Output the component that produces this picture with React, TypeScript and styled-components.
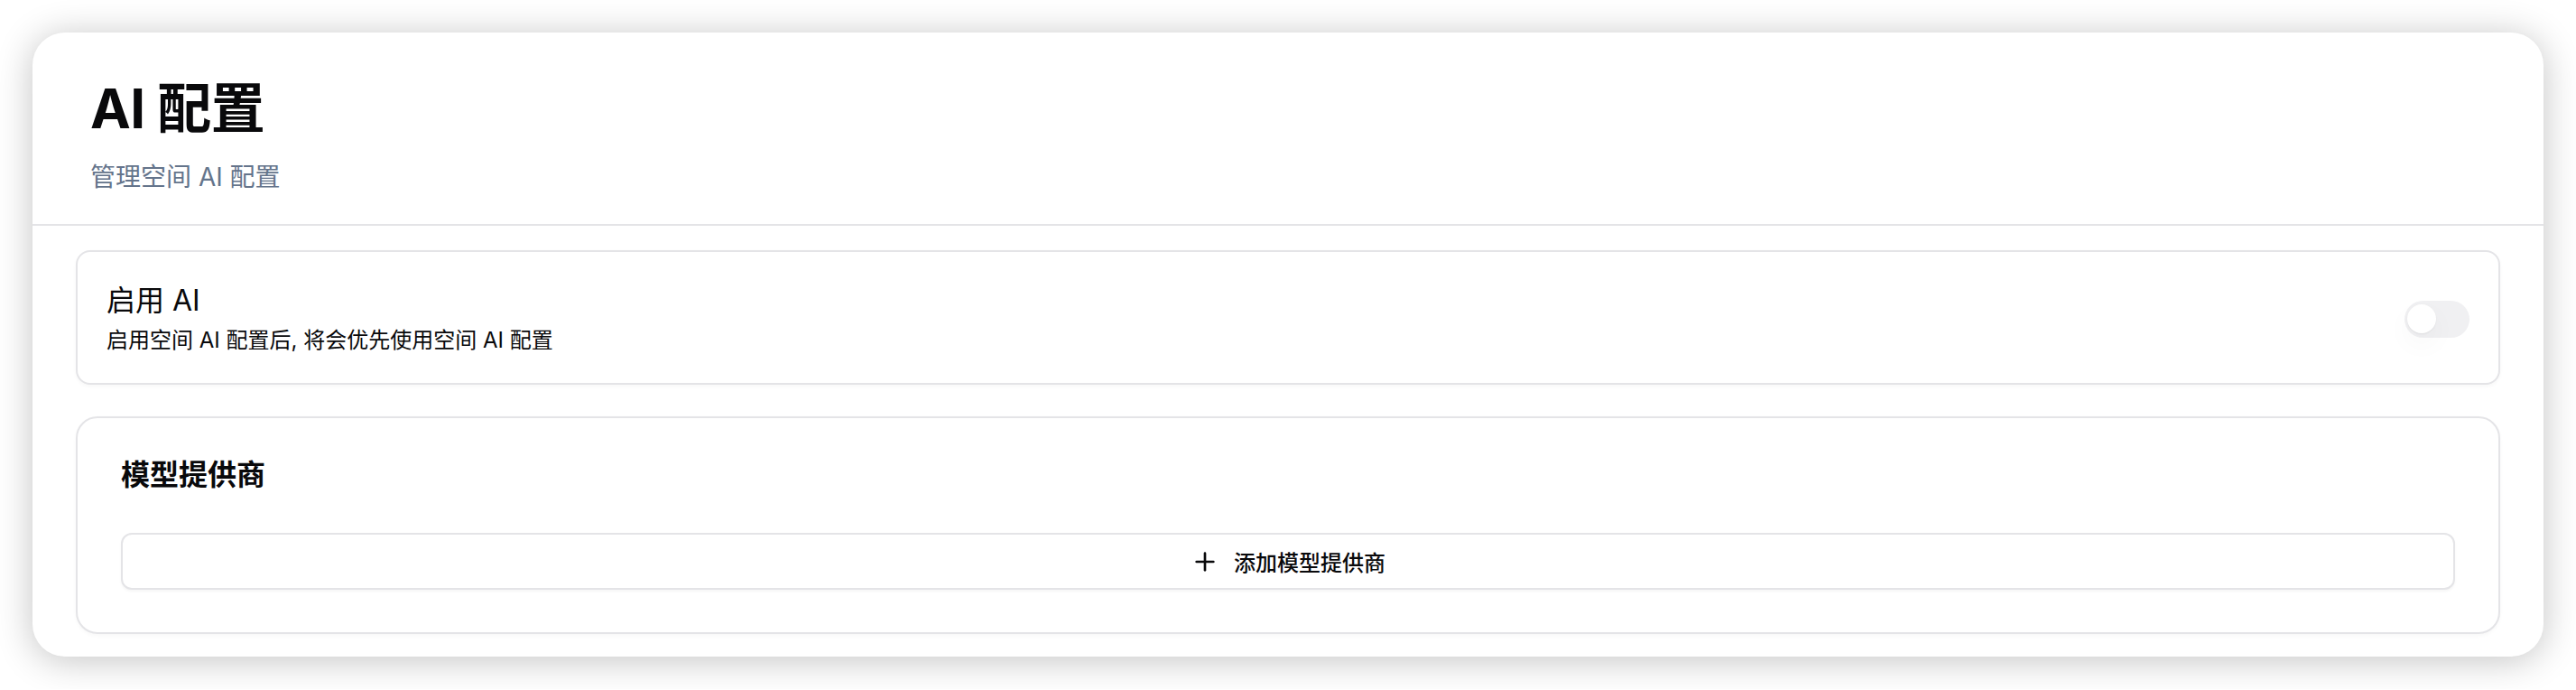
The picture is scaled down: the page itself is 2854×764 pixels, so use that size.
import React, { useState } from "react";
import styled, { createGlobalStyle } from "styled-components";

const GlobalStyle = createGlobalStyle`
  html, body {
    margin: 0;
    padding: 0;
    background: #ffffff;
  }
  body {
    font-family: Inter, "Noto Sans CJK SC", "Noto Sans", sans-serif;
    color: #09090b;
    -webkit-font-smoothing: antialiased;
  }
  * { box-sizing: border-box; }
`;

const Page = styled.div`
  padding: 36px;
  background: #ffffff;
`;

const Panel = styled.section`
  background: #ffffff;
  border-radius: 36px;
  box-shadow: 0 4px 40px rgba(0, 0, 0, 0.24);
  overflow: hidden;
`;

const Header = styled.header`
  padding: 48px 64px 32px;
  border-bottom: 2px solid #e4e4e7;
`;

const Title = styled.h1`
  margin: 0;
  font-size: 60px;
  line-height: 72px;
  font-weight: 700;
  letter-spacing: -0.5px;
  color: #09090b;
`;

const Subtitle = styled.p`
  margin: 20px 0 0;
  font-size: 28px;
  line-height: 40px;
  color: #64748b;
`;

const Body = styled.div`
  display: flex;
  flex-direction: column;
  gap: 35px;
  padding: 27px 48px 25px;
`;

const SettingCard = styled.div`
  display: flex;
  align-items: center;
  justify-content: space-between;
  padding: 34px 32px 31px;
  border: 2px solid #e4e4e7;
  border-radius: 16px;
  background: #ffffff;
  box-shadow: 0 2px 4px rgba(0, 0, 0, 0.03);
`;

const SettingText = styled.div`
  display: flex;
  flex-direction: column;
  gap: 8px;
`;

const SettingLabel = styled.div`
  font-size: 32px;
  line-height: 40px;
  font-weight: 400;
  color: #09090b;
`;

const SettingDesc = styled.div`
  font-size: 24px;
  line-height: 32px;
  color: #09090b;
`;

const SwitchTrack = styled.button<{ $on: boolean }>`
  position: relative;
  display: inline-flex;
  align-items: center;
  width: 72px;
  height: 41px;
  padding: 0 3px;
  border: none;
  border-radius: 999px;
  background: ${(p) => (p.$on ? "#18181b" : "#f0f0f2")};
  cursor: pointer;
  flex-shrink: 0;
`;

const SwitchThumb = styled.span<{ $on: boolean }>`
  display: block;
  width: 32px;
  height: 32px;
  border-radius: 50%;
  background: #ffffff;
  box-shadow: 0 1px 2px rgba(0, 0, 0, 0.06), 0 12px 30px rgba(0, 0, 0, 0.04);
  transform: translateX(${(p) => (p.$on ? "34px" : "0")});
  transition: transform 0.15s ease;
`;

const ProviderCard = styled.div`
  display: flex;
  flex-direction: column;
  gap: 48px;
  padding: 47px 48px 47px;
  border: 2px solid #e4e4e7;
  border-radius: 24px;
  background: #ffffff;
  box-shadow: 0 2px 4px rgba(0, 0, 0, 0.03);
`;

const CardTitle = styled.h3`
  margin: 0;
  font-size: 32px;
  line-height: 32px;
  font-weight: 700;
  color: #09090b;
`;

const AddButton = styled.button`
  display: flex;
  align-items: center;
  justify-content: center;
  gap: 16px;
  width: 100%;
  height: 63px;
  border: 2px solid #e4e4e7;
  border-radius: 12px;
  background: #ffffff;
  box-shadow: 0 2px 3px rgba(0, 0, 0, 0.04);
  font-family: Inter, "Noto Sans CJK SC", sans-serif;
  font-size: 24px;
  font-weight: 500;
  color: #09090b;
  cursor: pointer;
`;

const PlusIcon = () => (
  <svg
    width="32"
    height="32"
    viewBox="0 0 24 24"
    fill="none"
    stroke="currentColor"
    strokeWidth="2"
    strokeLinecap="round"
    strokeLinejoin="round"
  >
    <path d="M5 12h14" />
    <path d="M12 5v14" />
  </svg>
);

export default function App() {
  const [enabled, setEnabled] = useState(false);
  return (
    <>
      <GlobalStyle />
      <Page>
        <Panel>
          <Header>
            <Title>AI 配置</Title>
            <Subtitle>管理空间 AI 配置</Subtitle>
          </Header>
          <Body>
            <SettingCard>
              <SettingText>
                <SettingLabel>启用 AI</SettingLabel>
                <SettingDesc>启用空间 AI 配置后, 将会优先使用空间 AI 配置</SettingDesc>
              </SettingText>
              <SwitchTrack $on={enabled} onClick={() => setEnabled(!enabled)} aria-label="启用 AI">
                <SwitchThumb $on={enabled} />
              </SwitchTrack>
            </SettingCard>
            <ProviderCard>
              <CardTitle>模型提供商</CardTitle>
              <AddButton>
                <PlusIcon />
                添加模型提供商
              </AddButton>
            </ProviderCard>
          </Body>
        </Panel>
      </Page>
    </>
  );
}
